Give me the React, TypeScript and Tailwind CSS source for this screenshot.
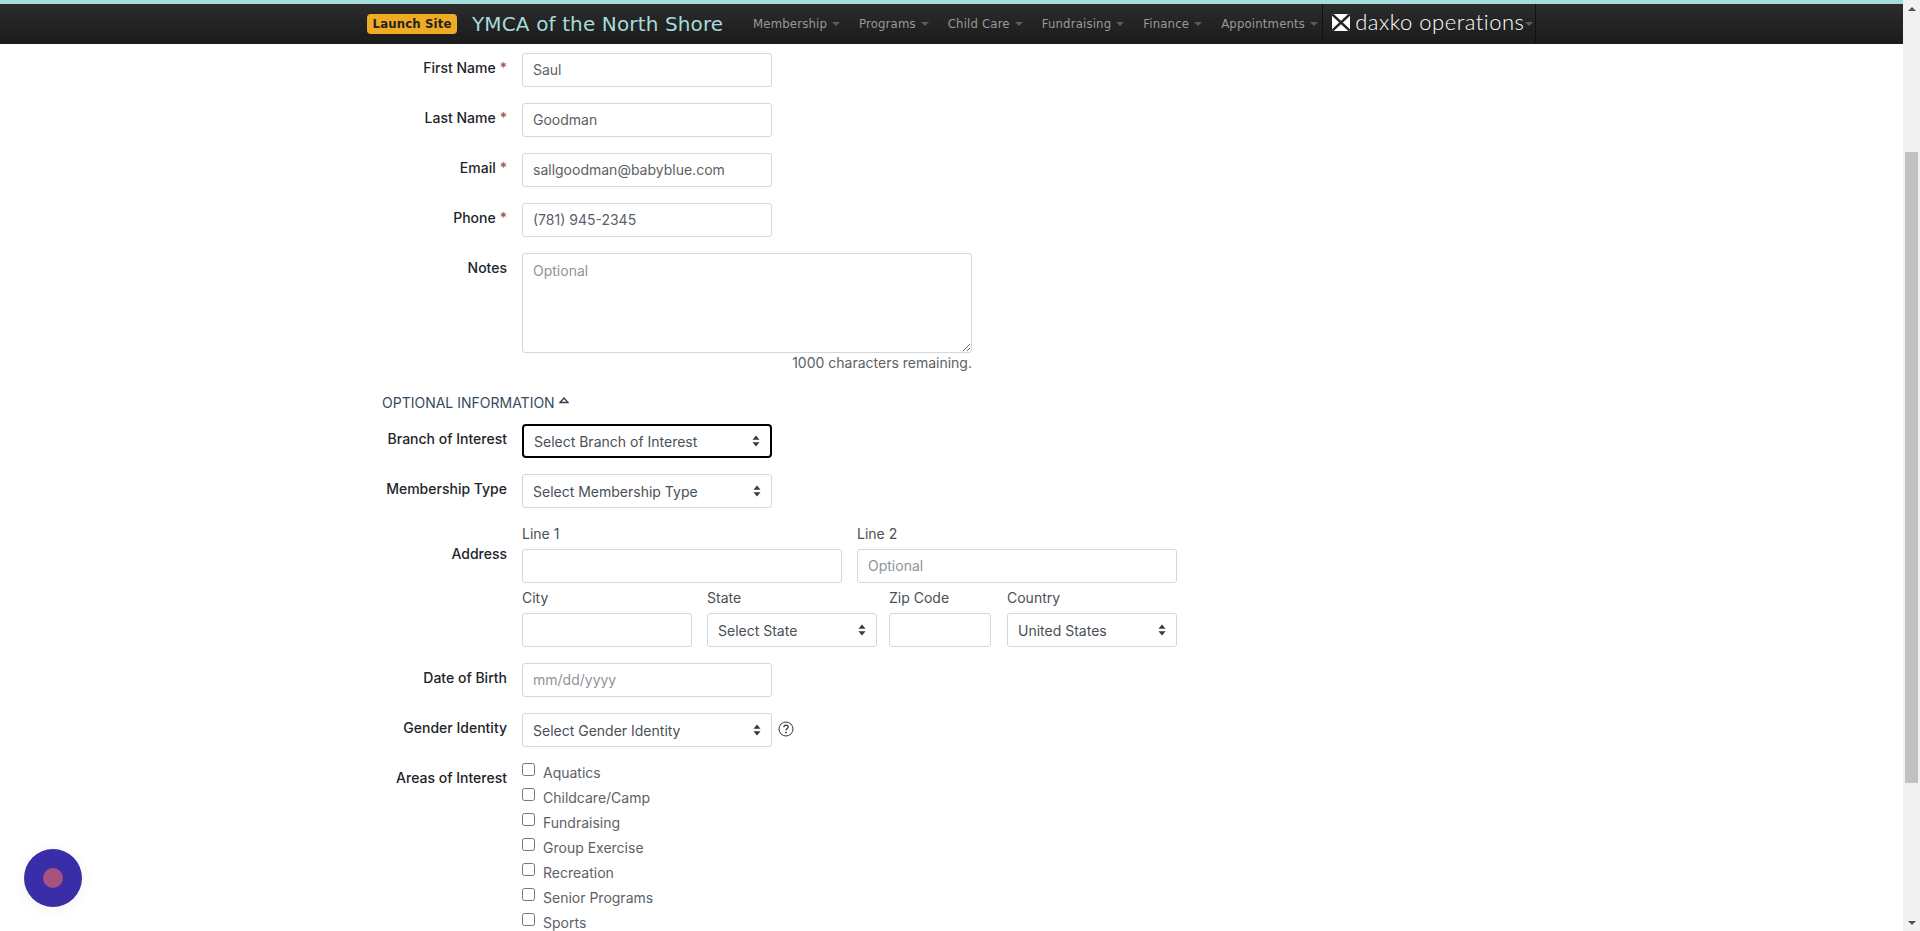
const labelClass = "w-[125px] shrink-0 text-right text-[14px] leading-5 font-medium text-[#212529]";
const inputClass =
  "block h-[34px] rounded-[3px] border border-[#d4d7da] bg-white px-[10px] pb-px text-[14px] text-[#5c6166] placeholder:text-[#8f9499] outline-none";

const navItems = ["Membership", "Programs", "Child Care", "Fundraising", "Finance", "Appointments"];
const interests = ["Aquatics", "Childcare/Camp", "Fundraising", "Group Exercise", "Recreation", "Senior Programs", "Sports"];

function Caret({ className = "border-t-[#5c5c5c]" }: { className?: string }) {
  return <span className={`inline-block h-0 w-0 border-x-4 border-t-4 border-x-transparent ${className}`} />;
}

function Arrows() {
  return (
    <svg width="8" height="12" viewBox="0 0 8 12" className="shrink-0">
      <path d="M4 0.5 L7.5 4.8 H0.5 Z M4 11.5 L0.5 7.2 H7.5 Z" fill="#343a40" />
    </svg>
  );
}

function FakeSelect({ text, width = "w-[250px]", focused = false }: { text: string; width?: string; focused?: boolean }) {
  return (
    <button
      type="button"
      className={`flex h-[34px] items-center justify-between rounded-[3px] bg-white pl-[10px] pr-[10px] text-[14px] text-[#495057] ${width} ${
        focused ? "rounded-[4px] border-2 border-black pl-[9px] pr-[9px]" : "border border-[#d4d7da]"
      }`}
    >
      <span>{text}</span>
      <Arrows />
    </button>
  );
}

function Row({ label, required, children }: { label: string; required?: boolean; children: React.ReactNode }) {
  return (
    <div className="mb-4 flex gap-[15px]">
      <div className={`${labelClass} pt-[5px]`}>
        {label}
        {required && <span className="ml-[4px] text-[#a8504c]">*</span>}
      </div>
      {children}
    </div>
  );
}

function SmallLabel({ children }: { children: React.ReactNode }) {
  return <div className="mb-[5px] h-5 text-[14px] leading-5 text-[#495057]">{children}</div>;
}

function Header() {
  return (
    <header className="h-[44px] shrink-0 border-t-4 border-t-[#a5dcdc] bg-gradient-to-b from-[#2c2c2c] to-[#1b1b1b] pl-[367px] font-['DejaVu_Sans_Condensed','DejaVu_Sans',sans-serif]">
      <div className="flex h-10 items-center">
        <span className="flex h-5 w-[90px] items-center justify-center rounded-[4px] bg-[#f0ab22] text-[13px] font-bold tracking-[0.15px] text-[#222]">
          Launch Site
        </span>
        <span className="ml-[15px] w-[281px] font-['DejaVu_Sans',sans-serif] text-[20px] tracking-[0.13px] text-[#a5dcdc]">
          YMCA of the North Shore
        </span>
        <nav className="flex items-center gap-[19px]">
          {navItems.map((item) => (
            <span key={item} className="flex items-center gap-[5px] text-[13px] tracking-[0.17px] text-[#999]">
              {item}
              <Caret />
            </span>
          ))}
        </nav>
        <div className="ml-[4px] flex h-10 w-[214px] items-center border-x border-x-[#111] pl-[9px]">
          <svg width="18" height="17" viewBox="0 0 18 17" className="mb-[3px] shrink-0">
            <rect width="18" height="17" rx="1.5" fill="#fff" />
            <path d="M0.5 0.5 L17.5 16.5 M17.5 0.5 L0.5 16.5" stroke="#222" strokeWidth="2.4" />
          </svg>
          <span className="ml-[5px] mb-[4px] font-['Lato',sans-serif] text-[22px] font-light leading-none tracking-[0.5px] text-white">
            daxko operations
          </span>
          <Caret className="ml-[1px] border-t-[#5c5c5c]" />
        </div>
      </div>
    </header>
  );
}

function Scrollbar() {
  return (
    <aside className="flex h-full w-[17px] shrink-0 flex-col items-center justify-between bg-[#f1f1f1]">
      <div className="flex w-full flex-col items-center">
        <div className="flex h-[17px] items-center justify-center">
          <span className="h-0 w-0 border-x-4 border-b-4 border-x-transparent border-b-[#505050]" />
        </div>
        <div className="mt-[135px] h-[631px] w-[13px] bg-[#c1c1c1]" />
      </div>
      <div className="flex h-[17px] items-center justify-center">
        <span className="h-0 w-0 border-x-4 border-t-4 border-x-transparent border-t-[#505050]" />
      </div>
    </aside>
  );
}

export default function App() {
  return (
    <div className="relative flex h-screen overflow-hidden bg-white font-['Inter',sans-serif]">
      <div className="flex min-w-0 flex-1 flex-col overflow-hidden">
        <Header />
        <main className="pl-[382px] pt-[9px]">
          <Row label="First Name" required>
            <input className={`${inputClass} w-[250px]`} defaultValue="Saul" />
          </Row>
          <Row label="Last Name" required>
            <input className={`${inputClass} w-[250px]`} defaultValue="Goodman" />
          </Row>
          <Row label="Email" required>
            <input className={`${inputClass} w-[250px]`} defaultValue="sallgoodman@babyblue.com" />
          </Row>
          <Row label="Phone" required>
            <input className={`${inputClass} w-[250px]`} defaultValue="(781) 945-2345" />
          </Row>

          <div className="flex gap-[15px]">
            <div className={`${labelClass} pt-[5px]`}>Notes</div>
            <div className="w-[450px]">
              <textarea
                className="block h-[100px] w-full rounded-[3px] border border-[#d4d7da] px-[10px] py-[6px] text-[14px] text-[#5c6166] outline-none placeholder:text-[#8f9499]"
                placeholder="Optional"
              />
              <div className="h-5 text-right text-[14px] leading-5 text-[#5c6166]">1000 characters remaining.</div>
            </div>
          </div>

          <div className="mt-[19px] mb-[12px] flex h-5 items-center gap-[4px] text-[14px] text-[#3a4a5c]">
            OPTIONAL INFORMATION
            <svg width="10" height="7" viewBox="0 0 10 7" className="mb-[3px]">
              <path d="M1 5.5 L5 1 L9 5.5 Z" fill="none" stroke="#2c3e50" strokeWidth="1.3" />
            </svg>
          </div>

          <Row label="Branch of Interest">
            <FakeSelect text="Select Branch of Interest" focused />
          </Row>
          <Row label="Membership Type">
            <FakeSelect text="Select Membership Type" />
          </Row>

          <div className="mb-4 flex gap-[15px]">
            <div className={`${labelClass} pt-[20px]`}>Address</div>
            <div className="w-[655px]">
              <div className="flex gap-[15px]">
                <div>
                  <SmallLabel>Line 1</SmallLabel>
                  <input className={`${inputClass} w-[320px]`} />
                </div>
                <div>
                  <SmallLabel>Line 2</SmallLabel>
                  <input className={`${inputClass} w-[320px]`} placeholder="Optional" />
                </div>
              </div>
              <div className="mt-[5px] flex">
                <div>
                  <SmallLabel>City</SmallLabel>
                  <input className={`${inputClass} w-[170px]`} />
                </div>
                <div className="ml-[15px]">
                  <SmallLabel>State</SmallLabel>
                  <FakeSelect text="Select State" width="w-[170px]" />
                </div>
                <div className="ml-3">
                  <SmallLabel>Zip Code</SmallLabel>
                  <input className={`${inputClass} w-[102px]`} />
                </div>
                <div className="ml-4">
                  <SmallLabel>Country</SmallLabel>
                  <FakeSelect text="United States" width="w-[170px]" />
                </div>
              </div>
            </div>
          </div>

          <Row label="Date of Birth">
            <input className={`${inputClass} w-[250px]`} placeholder="mm/dd/yyyy" />
          </Row>
          <Row label="Gender Identity">
            <div className="flex items-start gap-[6px]">
              <FakeSelect text="Select Gender Identity" />
              <svg width="16" height="16" viewBox="0 0 16 16" className="mt-2" fill="none" stroke="#333">
                <circle cx="8" cy="8" r="7" />
                <path d="M5.8 6.2 C5.8 4.8 6.9 4.1 8 4.1 C9.2 4.1 10.2 4.9 10.2 6 C10.2 7.4 8 7.6 8 9.4" strokeWidth="1.2" />
                <circle cx="8" cy="11.6" r="0.5" fill="#333" />
              </svg>
            </div>
          </Row>

          <div className="flex gap-[15px]">
            <div className={`${labelClass} pt-[5px]`}>Areas of Interest</div>
            <div className="flex flex-col gap-[9px]">
              {interests.map((item) => (
                <label key={item} className="flex h-4 text-[14px] leading-4 text-[#5c6166]">
                  <input type="checkbox" className="m-0 h-[13px] w-[13px]" />
                  <span className="ml-2 mt-[2px]">{item}</span>
                </label>
              ))}
            </div>
          </div>
        </main>
      </div>
      <Scrollbar />

      <div className="absolute bottom-[24px] left-[24px] flex h-[58px] w-[58px] items-center justify-center rounded-full bg-[#3a2ea8] shadow-[0_2px_16px_rgba(0,0,0,0.06)]">
        <span className="h-5 w-5 rounded-full bg-[#a8527f]" />
      </div>
    </div>
  );
}
